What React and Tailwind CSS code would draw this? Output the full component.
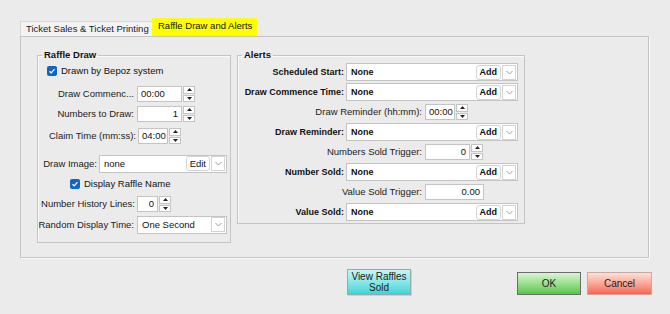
import React from "react";

const Chevron = () => (
  <svg width="7" height="5" viewBox="0 0 7 5" className="text-[#9a9a9a]">
    <polyline points="0.5,1 3.5,4 6.5,1" fill="none" stroke="currentColor" strokeWidth="1" />
  </svg>
);

const Check = () => (
  <div className="w-[10px] h-[10px] rounded-[2px] bg-[#1565c0] flex items-center justify-center">
    <svg width="8" height="8" viewBox="0 0 8 8">
      <polyline points="1.5,4.2 3.2,5.8 6.5,2.2" fill="none" stroke="#fff" strokeWidth="1.2" />
    </svg>
  </div>
);

const Arrows = () => (
  <div className="flex flex-col w-[12px] h-full ml-[1px] gap-[1px]">
    <div className="flex-1 bg-white border border-[#c4c4c4] flex items-center justify-center">
      <svg width="5" height="3" viewBox="0 0 5 3">
        <polygon points="2.5,0 5,3 0,3" fill="#222" />
      </svg>
    </div>
    <div className="flex-1 bg-white border border-[#c4c4c4] flex items-center justify-center">
      <svg width="5" height="3" viewBox="0 0 5 3">
        <polygon points="0,0 5,0 2.5,3" fill="#222" />
      </svg>
    </div>
  </div>
);

const Spin = ({ value, w, right, arrows = true }) => (
  <div className="flex items-stretch h-[16px]">
    <div
      className={`bg-white border border-[#c4c4c4] h-full flex items-center px-[3px] ${
        right ? "justify-end" : "justify-start"
      }`}
      style={{ width: w }}
    >
      {value}
    </div>
    {arrows && <Arrows />}
  </div>
);

const Combo = ({ text, w, button, bold }) => (
  <div
    className="flex items-center h-[18px] bg-white border border-[#c4c4c4] pr-[1px]"
    style={{ width: w }}
  >
    <span className={`flex-1 pl-[4px] ${bold ? "font-bold text-[9px]" : ""}`}>{text}</span>
    {button && (
      <div
        className={`h-[15px] px-[3px] flex items-center border border-[#d4d4d4] rounded-[3px] bg-white ${
          bold ? "font-bold text-[9px]" : ""
        }`}
      >
        {button}
      </div>
    )}
    <div className="w-[14px] h-[15px] ml-[1px] border border-[#d4d4d4] flex items-center justify-center">
      <Chevron />
    </div>
  </div>
);

const AlertCombo = ({ label }) => (
  <div className="flex items-center h-[20px]">
    <span className="w-[108px] text-right pr-[2px] font-bold text-[9px]">{label}</span>
    <Combo text="None" w="172px" button="Add" bold />
  </div>
);

const AlertField = ({ label, children }) => (
  <div className="flex items-center h-[20px]">
    <span className="w-[187px] text-right pr-[3px] text-[#222]">{label}</span>
    {children}
  </div>
);

export default function App() {
  return (
    <div className="w-[670px] h-[314px] bg-[#ebebeb] text-[#111] text-[9.5px] leading-[12px] font-['Liberation_Sans',Arial,sans-serif] overflow-hidden">
      <div className="pt-[18px] pl-[20px]">
        {/* tabs */}
        <div className="flex items-end h-[18px]">
          <div className="h-[15px] w-[132px] bg-[#f3f3f3] border-t border-l border-[#d6d6d6] flex items-center pl-[5px] text-[#222]">
            Ticket Sales &amp; Ticket Printing
          </div>
          <div className="h-[18px] w-[105px] bg-[#ffff00] flex items-center pl-[6px] pb-[2px]">
            Raffle Draw and Alerts
          </div>
        </div>

        {/* panel */}
        <div className="w-[629px] h-[222px] border border-[#c4c4c4] shadow-[1px_1px_0_#fafafa] flex items-start gap-[6px] pl-[16px] pt-[12px]">
          <fieldset className="w-[194px] h-[194px] border border-[#c4c4c4] shadow-[inset_1px_1px_0_#fafafa]">
            <legend className="ml-[4px] px-[2px] font-bold">Raffle Draw</legend>

            <div className="flex items-center h-[16px] mt-[2px] pl-[9px] gap-[4px]">
              <Check />
              <span>Drawn by Bepoz system</span>
            </div>

            <div className="flex items-center h-[16px] mt-[7px]">
              <span className="w-[99px] text-right pr-[3px] text-[#222]">Draw Commenc...</span>
              <Spin value="00:00" w="45px" />
            </div>
            <div className="flex items-center h-[16px] mt-[4px]">
              <span className="w-[99px] text-right pr-[3px] text-[#222]">Numbers to Draw:</span>
              <Spin value="1" w="45px" right />
            </div>
            <div className="flex items-center h-[16px] mt-[6px]">
              <span className="w-[100px] text-right pr-[2px] text-[#222]">Claim Time (mm:ss):</span>
              <Spin value="04:00" w="30px" />
            </div>

            <div className="flex items-center h-[17px] mt-[11px]">
              <span className="w-[61px] text-right pr-[2px] text-[#222]">Draw Image:</span>
              <Combo text="none" w="128px" button="Edit" />
            </div>

            <div className="flex items-center h-[16px] mt-[4px] pl-[32px] gap-[4px]">
              <Check />
              <span>Display Raffle Name</span>
            </div>

            <div className="flex items-center h-[16px] mt-[4px]">
              <span className="w-[99px] text-right pr-[2px] text-[#222]">Number History Lines:</span>
              <Spin value="0" w="21px" right />
            </div>
            <div className="flex items-center h-[17px] mt-[4px]">
              <span className="w-[99px] text-right pr-[3px] text-[#222]">Random Display Time:</span>
              <Combo text="One Second" w="90px" />
            </div>
          </fieldset>

          <fieldset className="w-[288px] h-[175px] border border-[#c4c4c4] shadow-[inset_1px_1px_0_#fafafa]">
            <legend className="ml-[4px] px-[2px] font-bold">Alerts</legend>
            <div className="mt-[1px]">
              <AlertCombo label="Scheduled Start:" />
              <AlertCombo label="Draw Commence Time:" />
              <AlertField label="Draw Reminder (hh:mm):">
                <Spin value="00:00" w="30px" />
              </AlertField>
              <AlertCombo label="Draw Reminder:" />
              <AlertField label="Numbers Sold Trigger:">
                <Spin value="0" w="45px" right />
              </AlertField>
              <AlertCombo label="Number Sold:" />
              <AlertField label="Value Sold Trigger:">
                <Spin value="0.00" w="59px" right arrows={false} />
              </AlertField>
              <AlertCombo label="Value Sold:" />
            </div>
          </fieldset>
        </div>

        {/* buttons */}
        <div className="flex items-end mt-[11px] text-[10px]">
          <div className="ml-[327px] w-[64px] h-[26px] border border-[#9aa8a8] bg-linear-to-b from-[#c4f6f6] to-[#34d6d8] flex flex-col items-center justify-center leading-[11px] text-[#222] shadow-[1px_1px_0_#d0d0d0]">
            <span>View Raffles</span>
            <span>Sold</span>
          </div>
          <div className="ml-[106px] w-[64px] h-[23px] border border-[#6c6c6c] bg-linear-to-b from-[#d6f6ce] to-[#56c646] flex items-center justify-center text-[#222]">
            OK
          </div>
          <div className="ml-[6px] w-[65px] h-[23px] border border-[#c8a8a0] bg-linear-to-b from-[#ffe0d8] to-[#f26652] flex items-center justify-center text-[#222]">
            Cancel
          </div>
        </div>
      </div>
    </div>
  );
}
